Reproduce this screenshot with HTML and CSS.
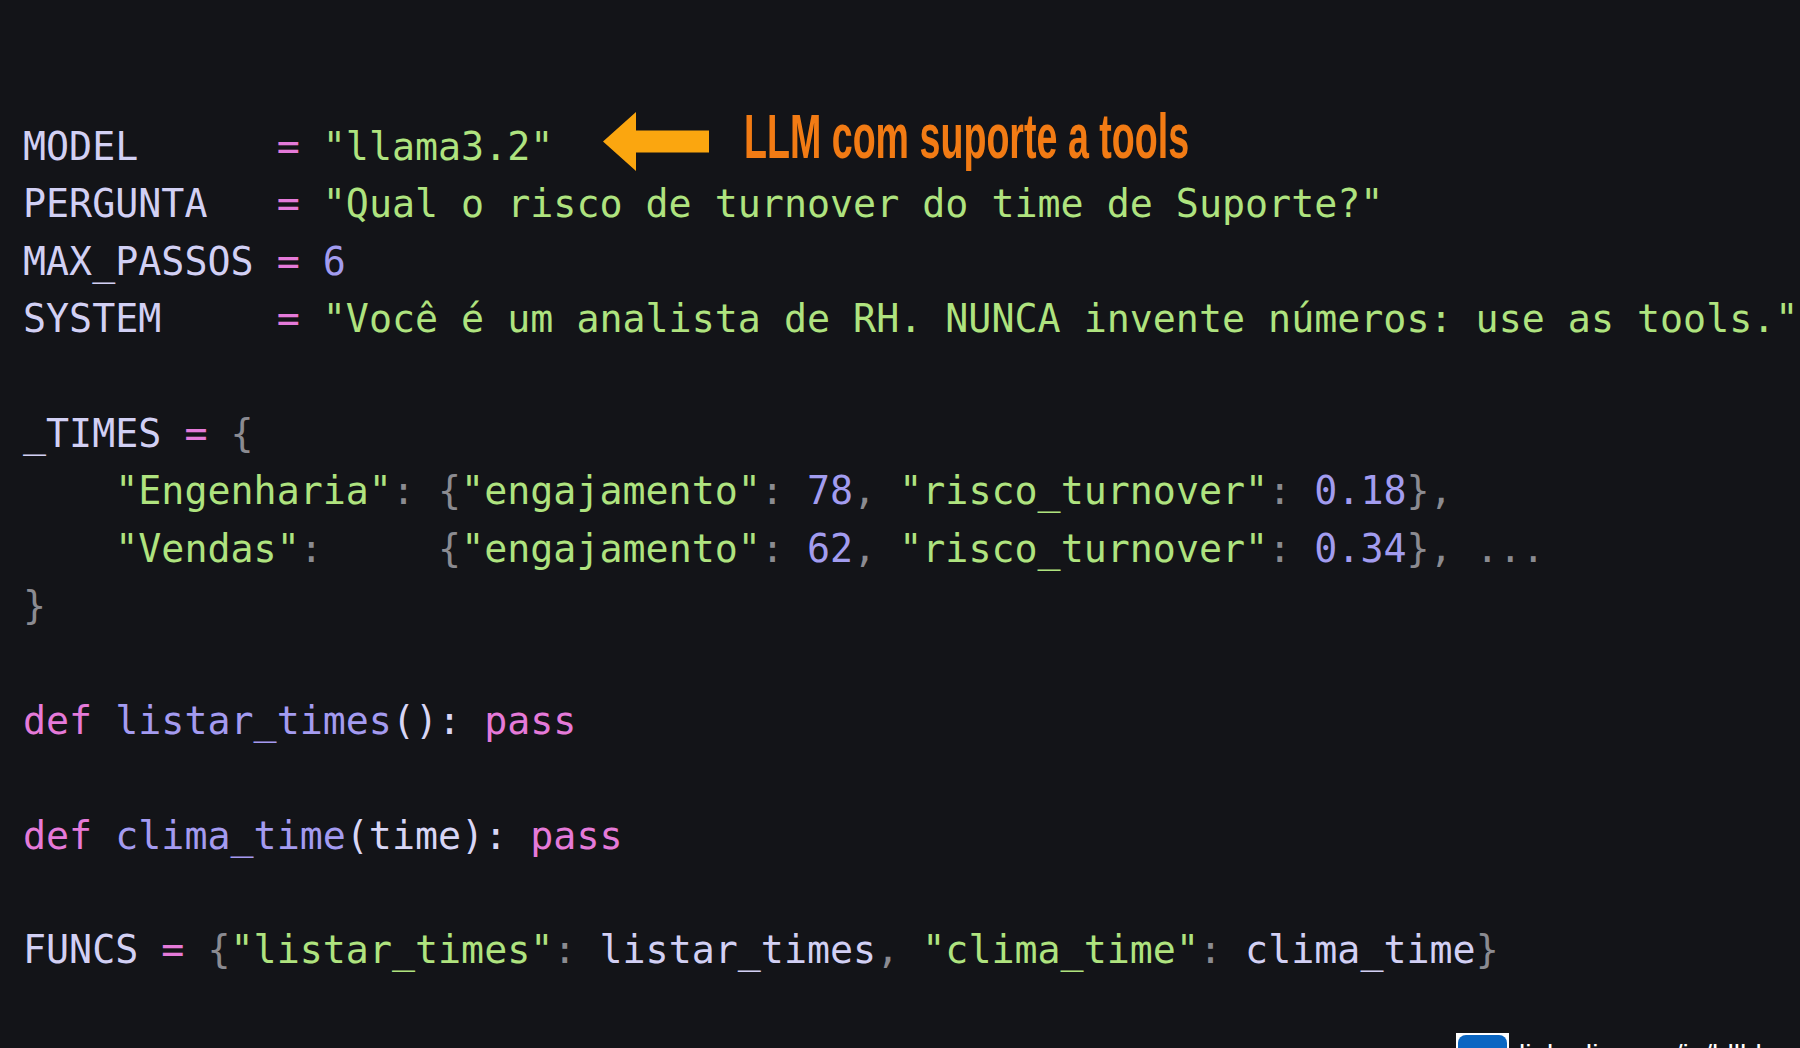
FILE: index.html
```html
<!DOCTYPE html>
<html lang="pt">
<head>
<meta charset="utf-8">
<title>Agente com tools</title>
<link rel="stylesheet" href="styles.css">
</head>
<body>
<main class="editor">
  <div class="code">
    <div class="line line-note"><span class="txt"><span class="id">MODEL</span>      <span class="op">=</span> <span class="str">"llama3.2"</span></span><span class="note"><svg class="arrow" width="106" height="59" viewBox="0 0 106 59"><polygon points="0,29.5 33,0 33,18.5 106,18.5 106,40.5 33,40.5 33,59" fill="#fba60f"/></svg><span class="note-label">LLM com suporte a tools</span></span></div>
    <div class="line"><span class="id">PERGUNTA</span>   <span class="op">=</span> <span class="str">"Qual o risco de turnover do time de Suporte?"</span></div>
    <div class="line"><span class="id">MAX_PASSOS</span> <span class="op">=</span> <span class="num">6</span></div>
    <div class="line"><span class="id">SYSTEM</span>     <span class="op">=</span> <span class="str">"Você é um analista de RH. NUNCA invente números: use as tools."</span></div>
    <div class="line"> </div>
    <div class="line"><span class="id">_TIMES</span> <span class="op">=</span> <span class="pun">{</span></div>
    <div class="line">    <span class="str">"Engenharia"</span><span class="pun">:</span> <span class="pun">{</span><span class="str">"engajamento"</span><span class="pun">:</span> <span class="num">78</span><span class="pun">,</span> <span class="str">"risco_turnover"</span><span class="pun">:</span> <span class="num">0.18</span><span class="pun">},</span></div>
    <div class="line">    <span class="str">"Vendas"</span><span class="pun">:</span>     <span class="pun">{</span><span class="str">"engajamento"</span><span class="pun">:</span> <span class="num">62</span><span class="pun">,</span> <span class="str">"risco_turnover"</span><span class="pun">:</span> <span class="num">0.34</span><span class="pun">},</span> <span class="pun">...</span></div>
    <div class="line"><span class="pun">}</span></div>
    <div class="line"> </div>
    <div class="line"><span class="kw">def</span> <span class="fn">listar_times</span><span class="plain">():</span> <span class="kw">pass</span></div>
    <div class="line"> </div>
    <div class="line"><span class="kw">def</span> <span class="fn">clima_time</span><span class="plain">(time):</span> <span class="kw">pass</span></div>
    <div class="line"> </div>
    <div class="line"><span class="id">FUNCS</span> <span class="op">=</span> <span class="pun">{</span><span class="str">"listar_times"</span><span class="pun">:</span> <span class="id">listar_times</span><span class="pun">,</span> <span class="str">"clima_time"</span><span class="pun">:</span> <span class="id">clima_time</span><span class="pun">}</span></div>
  </div>
  <div class="badge">
    <span class="badge-logo"><span class="badge-in"></span></span>
    <span class="badge-text">linkedin.com/in/ldlhl</span>
  </div>
</main>
</body>
</html>
```
FILE: styles.css
```css
html, body {
  margin: 0;
  padding: 0;
  background: #131418;
  width: 1800px;
  height: 1048px;
  overflow: hidden;
}

.editor {
  position: relative;
  width: 1800px;
  height: 1048px;
  overflow: hidden;
}

.code {
  padding: 118px 0 0 23px;
  font-family: "DejaVu Sans Mono", "Liberation Mono", monospace;
  font-size: 38.3px;
  color: #d2d0f4;
}

.line {
  height: 57.4px;
  line-height: 57.4px;
  white-space: pre;
}

.line-note {
  display: flex;
  align-items: center;
}

.note {
  display: flex;
  align-items: center;
  margin-left: 50px;
  height: 57.4px;
}

.arrow {
  display: block;
  flex: none;
  margin-top: -11px;
}

.note-label {
  margin-left: 35px;
  font-family: "Liberation Sans", Arial, sans-serif;
  font-weight: 700;
  font-size: 63px;
  line-height: 1;
  color: #f27b14;
  transform: scaleX(0.597);
  transform-origin: left center;
  margin-top: -21px;
  white-space: nowrap;
}

.id { color: #d2d0f4; }
.op { color: #e57ad9; }
.str { color: #afe37f; }
.num { color: #a29cef; }
.pun { color: #8b8b91; }
.kw { color: #e57ad9; }
.fn { color: #a49bf0; }
.plain { color: #d8d6f6; }

.badge {
  position: absolute;
  left: 1456px;
  top: 1033px;
  display: flex;
  align-items: flex-start;
  gap: 10px;
  white-space: nowrap;
}

.badge-logo {
  display: block;
  width: 53px;
  height: 53px;
  background: #ffffff;
  box-sizing: border-box;
  padding: 2px;
}

.badge-in {
  display: block;
  width: 49px;
  height: 49px;
  background: #0a66c2;
  border-radius: 8px;
}

.badge-text {
  font-family: "Liberation Sans", Arial, sans-serif;
  font-size: 28px;
  line-height: 1;
  color: #ffffff;
  margin-top: 8px;
}
```
